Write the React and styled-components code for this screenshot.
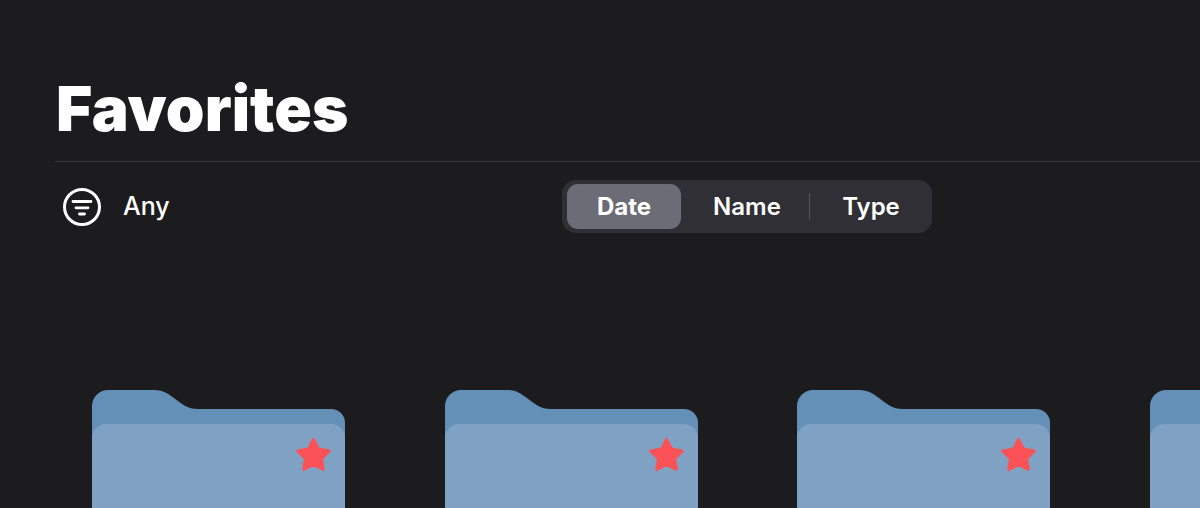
import React from 'react';
import styled, { createGlobalStyle } from 'styled-components';

const GlobalStyle = createGlobalStyle`
  html, body {
    margin: 0;
    padding: 0;
    background: #1c1c1e;
  }
`;

const Page = styled.div`
  width: 1200px;
  height: 508px;
  overflow: hidden;
  background: #1c1c1e;
  color: #fff;
  font-family: Inter, "Liberation Sans", sans-serif;
`;

const Header = styled.header`
  margin-left: 55px;
  padding-top: 73px;
  height: 88px;
  border-bottom: 1px solid #39393c;
`;

const Title = styled.h1`
  margin: 0 0 0 1px;
  font-size: 62px;
  line-height: 72px;
  font-weight: 900;
  letter-spacing: 0.1px;
`;

const Toolbar = styled.div`
  display: grid;
  grid-template-columns: 507px auto;
  align-items: center;
  margin-left: 55px;
  padding-top: 18px;
`;

const FilterButton = styled.div`
  display: flex;
  align-items: center;
  gap: 22px;
  padding-left: 8px;
  font-size: 25px;
  font-weight: 500;
`;

const FilterLabel = styled.span`
  margin-bottom: 2px;
`;

const Segmented = styled.div`
  display: flex;
  align-items: center;
  box-sizing: border-box;
  width: 370px;
  height: 53px;
  padding: 4px 0 4px 5px;
  border-radius: 14px;
  background: #2f2f35;
`;

const Segment = styled.div`
  display: flex;
  align-items: center;
  justify-content: center;
  box-sizing: border-box;
  width: ${(p) => p.$width}px;
  height: 45px;
  padding-left: ${(p) => p.$inset || 0}px;
  border-radius: 11px;
  background: ${(p) => (p.$active ? '#6c6c76' : 'transparent')};
  font-size: 24px;
  font-weight: ${(p) => (p.$active ? 700 : 600)};
`;

const Divider = styled.div`
  width: 1px;
  height: 27px;
  background: #55555b;
`;

const Folders = styled.div`
  display: flex;
  gap: 99.5px;
  margin-top: 157px;
  margin-left: 92px;
`;

const FolderIcon = styled.svg`
  display: block;
  flex: none;
  width: 253px;
  height: 118px;
`;

const Filter = () => (
  <svg width="38" height="38" viewBox="0 0 38 38" fill="none" stroke="#fff" strokeLinecap="round">
    <circle cx="19" cy="19" r="17.5" strokeWidth="3" />
    <path d="M10 13.500H28M13 19.800H25M16.500 26H21.500" strokeWidth="2.800" />
  </svg>
);

const Folder = () => (
  <FolderIcon viewBox="0 0 253 118">
    <path
      d="M0 16A16 16 0 0 1 16 0H62C72 0 76 4 82 8C90 14 95 19 106 19H239A14 14 0 0 1 253 33V60H0Z"
      fill="#6490b8"
    />
    <path d="M0 48A14 14 0 0 1 14 34H239A14 14 0 0 1 253 48V118H0Z" fill="#7fa1c3" />
    <path
      d="M221.500 49.500L226.500 59.100 237.200 60.900 229.600 68.600 231.200 79.350 221.500 74.500 211.800 79.350 213.400 68.600 205.800 60.900 216.500 59.100Z"
      fill="#fb5257"
      stroke="#fb5257"
      strokeWidth="3"
      strokeLinejoin="round"
    />
  </FolderIcon>
);

const App = () => (
  <Page>
    <GlobalStyle />
    <Header>
      <Title>Favorites</Title>
    </Header>
    <Toolbar>
      <FilterButton>
        <Filter />
        <FilterLabel>Any</FilterLabel>
      </FilterButton>
      <Segmented>
        <Segment $active $width={114}>Date</Segment>
        <Segment $width={128} $inset={4}>Name</Segment>
        <Divider />
        <Segment $width={122}>Type</Segment>
      </Segmented>
    </Toolbar>
    <Folders>
      {[0, 1, 2, 3].map((i) => (
        <Folder key={i} />
      ))}
    </Folders>
  </Page>
);

export default App;
